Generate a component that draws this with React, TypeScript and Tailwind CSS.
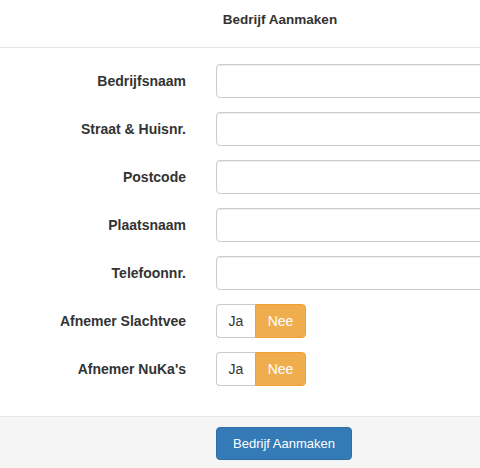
import React from "react";

const fields = ["Bedrijfsnaam", "Straat & Huisnr.", "Postcode", "Plaatsnaam", "Telefoonnr."];
const toggles = ["Afnemer Slachtvee", "Afnemer NuKa's"];

export default function App() {
  return (
    <div className="w-[480px] h-[468px] overflow-hidden bg-white" style={{ fontFamily: '"Liberation Sans", Arial, sans-serif' }}>
      <div className="w-[560px] text-[#333]">
        <div className="h-[48px] border-b border-[#e5e5e5] pt-[11px] text-center">
          <div className="text-[13.5px] leading-[18px] font-bold">Bedrijf Aanmaken</div>
        </div>
        <div className="pt-[16px] pb-[30px] flex flex-col gap-[14px]">
          {fields.map((f) => (
            <div key={f} className="flex items-center h-[34px]">
              <div className="w-[201px] pr-[15px] text-right text-[14px] font-bold leading-[20px]">{f}</div>
              <div className="w-[329px] ml-[15px] h-[34px] rounded-[4px] border border-[#ccc] bg-white shadow-[inset_0_1px_1px_rgba(0,0,0,0.075)]" />
            </div>
          ))}
          {toggles.map((f) => (
            <div key={f} className="flex items-center h-[34px]">
              <div className="w-[201px] pr-[15px] text-right text-[14px] font-bold leading-[20px]">{f}</div>
              <div className="ml-[15px] flex h-[34px]">
                <div className="w-[39px] h-full flex items-center justify-center border border-[#ccc] border-r-0 rounded-l-[4px] bg-white text-[14px] text-[#333]">Ja</div>
                <div className="w-[51px] h-full flex items-center justify-center border border-[#eea236] rounded-r-[4px] bg-[#f0ad4e] text-[14px] text-white">Nee</div>
              </div>
            </div>
          ))}
        </div>
        <div className="border-t border-[#e5e5e5] bg-[#f5f5f5] h-[60px] pt-[10px] pl-[216px]">
          <div className="w-[136px] h-[33px] rounded-[4px] border border-[#2e6da4] bg-[#337ab7] text-white text-[13px] flex items-center justify-center">Bedrijf Aanmaken</div>
        </div>
      </div>
    </div>
  );
}
